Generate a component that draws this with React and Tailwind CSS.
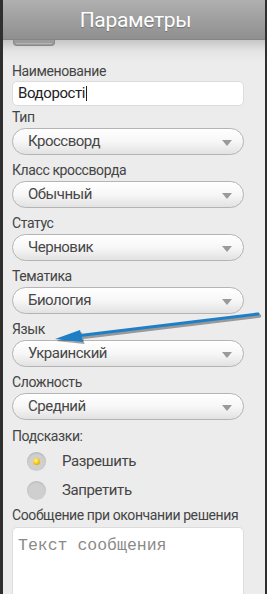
import React from "react";

const font = { fontFamily: "Roboto, 'Noto Sans', sans-serif" };

function Label({ children, className = "" }) {
  return (
    <div className={"h-[18px] leading-[18px] text-[14px] tracking-[-0.4px] text-[#444] " + className}>{children}</div>
  );
}

function Select({ value, className = "" }) {
  return (
    <div
      className={
        "relative h-[27px] w-[232px] rounded-full border border-[#b4b4b4] bg-gradient-to-b from-[#ffffff] via-[#f7f7f7] to-[#e2e2e2] shadow-[inset_0_1px_0_#fff] flex items-center pl-[15px] " +
        className
      }
    >
      <span className="text-[15px] tracking-[-0.5px] text-[#474747] leading-none">{value}</span>
      <span className="absolute right-[11px] top-[11px] w-0 h-0 border-l-[5px] border-r-[5px] border-t-[6px] border-l-transparent border-r-transparent border-t-[#9a9a9a]" />
    </div>
  );
}

export default function App() {
  return (
    <div
      className="relative w-[267px] h-[594px] overflow-hidden bg-[#ececec] border-l-[3px] border-r-[2px] border-[#2f2f2f]"
      style={font}
    >
      <div className="h-[40px] bg-gradient-to-b from-[#b0b0b0] to-[#8f8f8f] border-b border-[#858585] flex items-center justify-center">
        <span className="text-white text-[21px] leading-none tracking-[-0.3px] [text-shadow:0_1px_1px_rgba(0,0,0,0.25)] ml-[3px] mt-[2px]">
          Параметры
        </span>
      </div>
      <div className="h-[22px] bg-gradient-to-b from-[#c6c6c6] via-[#e4e4e4] to-[#ececec]">
        <div className="ml-[10px] w-[42px] h-[6px] bg-[#9c9c9c] rounded-b-[4px] border border-t-0 border-[#888] flex items-end justify-center pb-[1px]">
          <div className="w-[36px] h-[1px] bg-[#b4b4b4]" />
        </div>
      </div>
      <div className="pl-[9px]">
        <Label>Наименование</Label>
        <div className="mt-[1px] h-[25px] w-[232px] rounded-[5px] bg-white border border-[#dcdcdc] flex items-center pl-[5px]">
          <span className="text-[15px] tracking-[-0.4px] text-[#222] leading-none">Водорості</span>
          <span className="w-[1px] h-[15px] bg-[#222] ml-[1px]" />
        </div>
        <Label className="mt-[2px]">Тип</Label>
        <Select value="Кроссворд" className="mt-[2px]" />
        <Label className="mt-[6px]">Класс кроссворда</Label>
        <Select value="Обычный" className="mt-[2px]" />
        <Label className="mt-[6px]">Статус</Label>
        <Select value="Черновик" className="mt-[2px]" />
        <Label className="mt-[6px]">Тематика</Label>
        <Select value="Биология" className="mt-[2px]" />
        <Label className="mt-[6px]">Язык</Label>
        <Select value="Украинский" className="mt-[2px]" />
        <Label className="mt-[6px]">Сложность</Label>
        <Select value="Средний" className="mt-[2px]" />
        <Label className="mt-[7px]">Подсказки:</Label>
        <div className="mt-[6px] flex items-center h-[20px]">
          <div className="ml-[15px] w-[19px] h-[19px] rounded-full bg-[#cfcfcf] shadow-[inset_0_1px_2px_rgba(0,0,0,0.15)] flex items-center justify-center">
            <div className="w-[7px] h-[7px] rounded-full bg-[radial-gradient(circle_at_40%_35%,#fff2a0,#f2c200_60%,#b58a00)]" />
          </div>
          <span className="ml-[16px] text-[15px] tracking-[-0.4px] text-[#444]">Разрешить</span>
        </div>
        <div className="mt-[9px] flex items-center h-[20px]">
          <div className="ml-[15px] w-[19px] h-[19px] rounded-full bg-[#cfcfcf] shadow-[inset_0_1px_2px_rgba(0,0,0,0.12)]" />
          <span className="ml-[16px] text-[15px] tracking-[-0.4px] text-[#444]">Запретить</span>
        </div>
        <Label className="mt-[6px]">Сообщение при окончании решения</Label>
        <div className="mt-[3px] h-[80px] w-[232px] rounded-[5px] bg-white border border-[#dcdcdc] pl-[5px] pt-[5px]">
          <span
            className="text-[16.5px] leading-[18px] text-[#8a8a8a]"
            style={{ fontFamily: "'Liberation Mono', monospace" }}
          >
            Текст сообщения
          </span>
        </div>
      </div>
      <svg
        className="absolute left-0 top-0 pointer-events-none"
        width="267"
        height="594"
        viewBox="0 0 267 594"
      >
        <g transform="translate(-3,0)">
          <g opacity="0.35" transform="translate(1.5,2)">
            <line x1="258" y1="314" x2="76" y2="336" stroke="#000" strokeWidth="3.5" strokeLinecap="round" />
            <polygon points="55,339 80,330 83,342" fill="#000" />
          </g>
          <line x1="258" y1="314" x2="76" y2="336" stroke="#1f7fc6" strokeWidth="3.2" strokeLinecap="round" />
          <polygon points="55,339 80,330 83,342" fill="#1f7fc6" />
        </g>
      </svg>
    </div>
  );
}
